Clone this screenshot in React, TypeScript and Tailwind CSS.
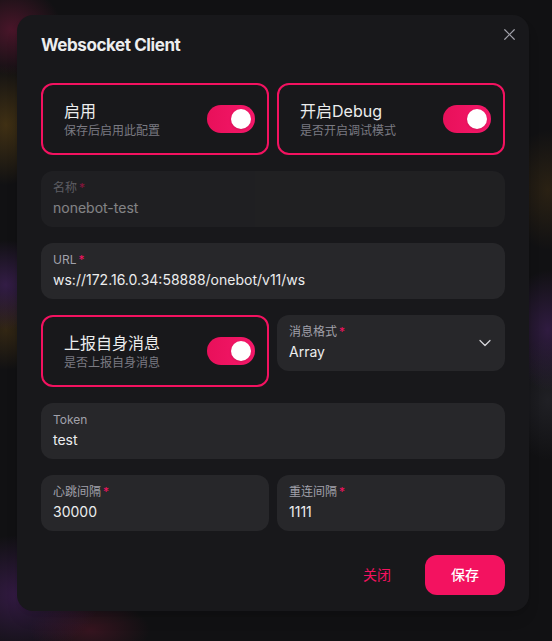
import { ChevronDown, X } from 'lucide-react'

function Toggle() {
  return (
    <span className="flex h-7 w-12 shrink-0 items-center justify-end rounded-full bg-[linear-gradient(90deg,#e8105a,#f5186a)] px-1">
      <span className="size-5 rounded-full bg-white shadow-sm" />
    </span>
  )
}

function SwitchCard({ title, desc }: { title: string; desc: string }) {
  return (
    <label className="flex h-[72px] cursor-pointer items-center justify-between rounded-xl border-2 border-[#f31260] bg-[#18181b] pl-[21px] pr-3">
      <div className="flex flex-col">
        <span className="text-base leading-6 text-[#ecedee]">{title}</span>
        <span className="text-xs leading-4 text-[#7a7a82]">{desc}</span>
      </div>
      <Toggle />
    </label>
  )
}

function Field({
  label,
  value,
  required,
  disabled,
}: {
  label: string
  value: string
  required?: boolean
  disabled?: boolean
}) {
  return (
    <div
      className={
        disabled
          ? 'flex h-14 flex-col justify-center gap-0.5 rounded-xl bg-[#27272a] px-3 opacity-50'
          : 'flex h-14 flex-col justify-center gap-0.5 rounded-xl bg-[#27272a] px-3'
      }
    >
      <span className="text-xs leading-4 text-[#a1a1aa]">
        {label}
        {required && <span className="ml-0.5 text-[#f31260]">*</span>}
      </span>
      <span className="text-sm leading-5 text-[#ecedee]">{value}</span>
    </div>
  )
}

export default function App() {
  return (
    <div className="min-h-screen bg-[#111113] bg-[radial-gradient(50px_45px_at_12px_30px,rgba(120,25,60,0.55),transparent),radial-gradient(45px_60px_at_6px_125px,rgba(120,85,20,0.45),transparent),radial-gradient(45px_45px_at_6px_285px,rgba(85,40,120,0.5),transparent),radial-gradient(40px_40px_at_6px_330px,rgba(100,70,20,0.4),transparent),radial-gradient(80px_60px_at_20px_595px,rgba(85,35,115,0.5),transparent),radial-gradient(60px_30px_at_90px_630px,rgba(110,25,50,0.4),transparent),radial-gradient(40px_60px_at_548px_330px,rgba(85,40,120,0.45),transparent),radial-gradient(40px_60px_at_548px_190px,rgba(100,70,20,0.3),transparent),radial-gradient(40px_60px_at_548px_400px,rgba(60,60,70,0.35),transparent)] pl-[17px] pt-[15px] font-['Inter','Noto_Sans_CJK_SC',sans-serif]">
      <div className="relative flex w-[512px] flex-col rounded-2xl bg-[#18181b] shadow-lg">
        <button className="absolute right-[10px] top-[9px] flex size-5 items-center justify-center text-[#a1a1aa]">
          <X size={19} strokeWidth={1.5} />
        </button>

        <header className="px-6 py-4 text-[17px] font-bold leading-7 tracking-tight text-[#ecedee]">
          Websocket Client
        </header>

        <div className="flex flex-col gap-4 px-6 py-2">
          <div className="grid grid-cols-2 gap-2">
            <SwitchCard title="启用" desc="保存后启用此配置" />
            <SwitchCard title="开启Debug" desc="是否开启调试模式" />
          </div>

          <Field label="名称" value="nonebot-test" required disabled />
          <Field label="URL" value="ws://172.16.0.34:58888/onebot/v11/ws" required />

          <div className="grid grid-cols-2 items-start gap-2">
            <SwitchCard title="上报自身消息" desc="是否上报自身消息" />
            <div className="flex h-14 items-center rounded-xl bg-[#27272a] pl-3 pr-[10px]">
              <div className="flex flex-1 flex-col gap-0.5">
                <span className="text-xs leading-4 text-[#a1a1aa]">
                  消息格式<span className="ml-0.5 text-[#f31260]">*</span>
                </span>
                <span className="text-sm leading-5 text-[#ecedee]">Array</span>
              </div>
              <ChevronDown size={20} strokeWidth={1.5} className="text-[#d4d4d8]" />
            </div>
          </div>

          <Field label="Token" value="test" />

          <div className="grid grid-cols-2 gap-2">
            <Field label="心跳间隔" value="30000" required />
            <Field label="重连间隔" value="1111" required />
          </div>
        </div>

        <footer className="flex justify-end gap-2 px-6 py-4">
          <button className="h-10 min-w-20 rounded-xl px-4 text-sm text-[#f31260]">关闭</button>
          <button className="h-10 min-w-20 rounded-xl bg-[#f31260] px-4 text-sm font-medium text-white">
            保存
          </button>
        </footer>
      </div>
    </div>
  )
}
